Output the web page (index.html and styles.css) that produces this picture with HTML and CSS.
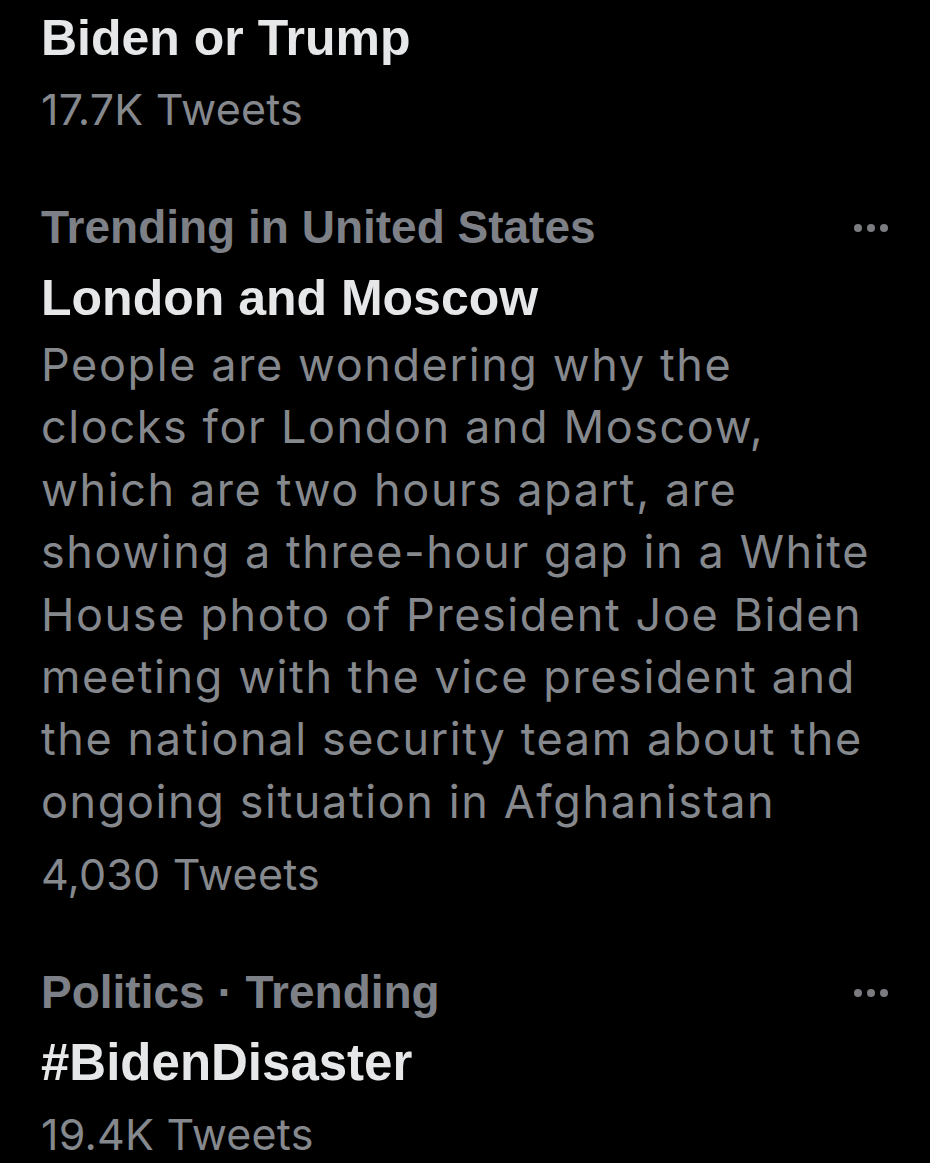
FILE: index.html
```html
<!DOCTYPE html>
<html lang="en">
<head>
<meta charset="utf-8">
<title>Trends</title>
<link rel="stylesheet" href="styles.css">
</head>
<body>
<main class="trends">
  <section class="trend trend-first">
    <div class="trend-title">Biden or Trump</div>
    <div class="trend-count">17.7K Tweets</div>
  </section>

  <section class="trend">
    <div class="trend-head">
      <div class="trend-category">Trending in United States</div>
      <span class="more" aria-label="More"><i></i><i></i><i></i></span>
    </div>
    <div class="trend-title">London and Moscow</div>
    <p class="trend-desc">People are wondering why the<br>clocks for London and Moscow,<br>which are two hours apart, are<br>showing a three-hour gap in a White<br>House photo of President Joe Biden<br>meeting with the vice president and<br>the national security team about the<br>ongoing situation in Afghanistan</p>
    <div class="trend-count">4,030 Tweets</div>
  </section>

  <section class="trend">
    <div class="trend-head">
      <div class="trend-category">Politics · Trending</div>
      <span class="more" aria-label="More"><i></i><i></i><i></i></span>
    </div>
    <div class="trend-title title-tag">#BidenDisaster</div>
    <div class="trend-count">19.4K Tweets</div>
  </section>
</main>
</body>
</html>
```

FILE: styles.css
```css
html, body {
  margin: 0;
  padding: 0;
  background: #000;
}

body {
  width: 930px;
  height: 1163px;
  overflow: hidden;
}

.trends {
  display: flex;
  flex-direction: column;
  gap: 48px;
  padding: 0 48px 0 41px;
}

.trend-first {
  margin-top: 2px;
}

.trend-head {
  display: flex;
  align-items: center;
  justify-content: space-between;
}

.trend-category {
  font-family: "Liberation Sans", Arial, sans-serif;
  font-weight: 700;
  font-size: 46px;
  line-height: 70px;
  color: #7d8086;
}

.trend-title {
  font-family: "Liberation Sans", Arial, sans-serif;
  font-weight: 700;
  font-size: 50px;
  line-height: 72px;
  color: #e6e7e8;
}

.title-tag {
  font-size: 51px;
}

.trend-desc {
  margin: 0 0 6px;
  font-family: "Inter", "Liberation Sans", sans-serif;
  font-weight: 400;
  font-size: 45px;
  line-height: 62.4px;
  letter-spacing: 1.6px;
  color: #85888d;
}

.trend-count {
  font-family: "Inter", "Liberation Sans", sans-serif;
  font-weight: 400;
  font-size: 43px;
  line-height: 70px;
  letter-spacing: 0.2px;
  color: #85888d;
}

.more {
  display: flex;
  gap: 5px;
  margin-right: -6px;
  margin-top: 2px;
}

.more i {
  display: block;
  width: 8px;
  height: 8px;
  border-radius: 50%;
  background: #7a7c80;
}
```
